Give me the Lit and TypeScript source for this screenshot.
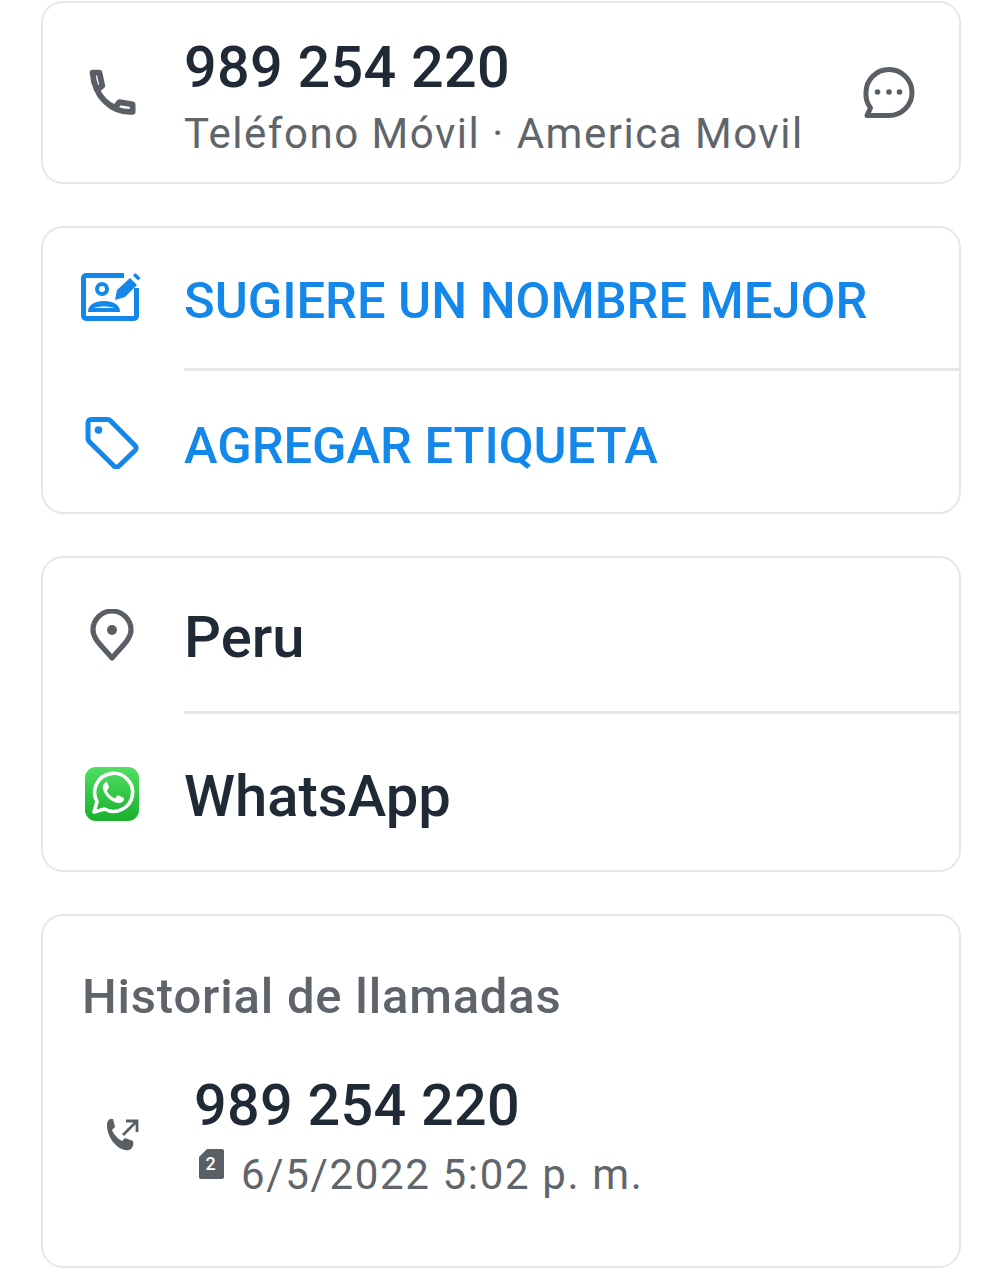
import { LitElement, html, css, svg } from "lit";
import { customElement } from "lit/decorators.js";

const phone = svg`<path d="M8 6.500h5.200l2.200 10-4 3.200c2.400 5.600 7 10.600 13.600 13.400l3.400-4.200 10 1.800v5.600c-15.500 1-29-11-30.400-29.800z" fill="none" stroke="currentColor" stroke-width="4.400" stroke-linejoin="round"/>`;

@customElement("app-root")
export class AppRoot extends LitElement {
  static styles = css`
    :host {
      display: block;
      width: 997px;
      height: 1280px;
      background: #fff;
      font-family: Roboto, "Noto Sans", sans-serif;
      color: #1f2a36;
      overflow: hidden;
    }
    .page {
      display: flex;
      flex-direction: column;
      gap: 42px;
      padding: 1px 36px 0 41px;
    }
    .card {
      border: 2px solid #e6e7e9;
      border-radius: 22px;
      background: #fff;
      box-sizing: border-box;
    }
    .contact {
      height: 183px;
      display: flex;
      align-items: center;
    }
    .slot {
      width: 141px;
      flex: none;
      display: flex;
      justify-content: center;
      box-sizing: border-box;
      color: #5a5f66;
    }
    .slot.nudge { padding-right: 4px; }
    .slot.edit { padding-right: 6px; }
    .slot svg { display: block; }
    .text { flex: 1; min-width: 0; margin-top: 10px; }
    .grow { flex: 1; min-width: 0; }
    .number {
      font-size: 57.5px;
      font-weight: 500;
      line-height: 66px;
      letter-spacing: 0.3px;
    }
    .sub {
      font-size: 42px;
      line-height: 52px;
      color: #60656c;
      letter-spacing: 1.52px;
      margin-top: 7px;
    }
    .bubble { width: 54px; margin-right: 43px; color: #5a5f66; }
    .row {
      display: flex;
      align-items: center;
      box-sizing: border-box;
    }
    .action { color: #1488ea; font-size: 50.6px; font-weight: 500; }
    .action .slot { color: #1488ea; }
    .suggest { height: 140px; padding-bottom: 3px; }
    .suggest span { margin-top: 7px; }
    .tag { height: 141px; padding-top: 3px; }
    .tag span { margin-top: 5px; }
    .info { font-size: 58px; font-weight: 500; }
    .info span { margin-top: 3px; }
    .place { height: 153px; padding-top: 1px; }
    .app { height: 156px; padding-top: 4px; }
    .divider {
      height: 3px;
      background: #e6e7e9;
      margin-left: 141px;
    }
    .history {
      height: 354px;
      padding: 53px 0 0 39px;
    }
    .heading {
      font-size: 49px;
      font-weight: 500;
      line-height: 56px;
      letter-spacing: 0.8px;
      color: #5f646b;
    }
    .call {
      display: flex;
      align-items: center;
      margin-top: 48px;
    }
    .call-icon {
      width: 112px;
      flex: none;
      padding-left: 24px;
      margin-top: -4px;
      box-sizing: border-box;
      color: #5a5f66;
    }
    .call-icon svg { display: block; }
    .meta {
      display: flex;
      align-items: center;
      gap: 17px;
      font-size: 42px;
      line-height: 52px;
      color: #60656c;
      letter-spacing: 1.65px;
      margin-top: 10px;
    }
    .sim { color: #5a5f66; margin-top: -22px; margin-left: 5px; }
    .sim svg { display: block; }
    .sim text { font-family: Roboto, sans-serif; font-size: 18px; font-weight: 500; fill: #fff; }
  `;

  render() {
    return html`<div class="page">
      <section class="card contact">
        <div class="slot edit">
          <svg width="58" height="58" viewBox="0 0 44 44">${phone}</svg>
        </div>
        <div class="text">
          <div class="number">989 254 220</div>
          <div class="sub">Teléfono Móvil · America Movil</div>
        </div>
        <svg class="bubble" height="55" viewBox="0 0 54 54">
          <path d="M4 27a23 23 0 1 1 23 23H5l3.500-7.500A23 23 0 0 1 4 27z" fill="none" stroke="currentColor" stroke-width="5" stroke-linejoin="round"/>
          <circle cx="15.500" cy="26.500" r="2.800" fill="currentColor"/>
          <circle cx="27" cy="26.500" r="2.800" fill="currentColor"/>
          <circle cx="37.500" cy="26.500" r="2.800" fill="currentColor"/>
        </svg>
      </section>

      <section class="card">
        <div class="row action suggest">
          <div class="slot edit">
            <svg width="60" height="48" viewBox="0 0 60 48">
              <path d="M43 2.500H5a2.500 2.500 0 0 0-2.500 2.500v38a2.500 2.500 0 0 0 2.500 2.500h48a2.500 2.500 0 0 0 2.500-2.500V15" fill="none" stroke="currentColor" stroke-width="5"/>
              <circle cx="21" cy="16" r="5" fill="none" stroke="currentColor" stroke-width="4"/>
              <path d="M7 39c0-7 6-11 16-11s16 4 16 11z" fill="currentColor"/>
              <path d="M13 35c4-2 16-2 20 0z" fill="#fff"/>
              <path d="M34 27l2-10L49 5l7 7-12 12z" fill="currentColor"/>
              <path d="M52 2.500l2.500-2.500 5 5-2.500 2.500z" fill="currentColor"/>
            </svg>
          </div>
          <span>SUGIERE UN NOMBRE MEJOR</span>
        </div>
        <div class="divider"></div>
        <div class="row action tag">
          <div class="slot nudge">
            <svg width="54" height="52" viewBox="0 0 54 52">
              <path d="M6 2.500h16.500c1.300 0 2.300.5 3.200 1.400L50 28.500c1.500 1.500 1.500 3.500 0 5L34 49c-1.500 1.500-3.500 1.500-5 0L4.300 24.700c-.9-.9-1.300-2-1.300-3.200V6c0-2 1.300-3.500 3-3.500z" fill="none" stroke="currentColor" stroke-width="5" stroke-linejoin="round"/>
              <circle cx="13.500" cy="13" r="3.800" fill="currentColor"/>
            </svg>
          </div>
          <span>AGREGAR ETIQUETA</span>
        </div>
      </section>

      <section class="card">
        <div class="row info place">
          <div class="slot nudge">
            <svg width="44" height="52" viewBox="0 0 44 52">
              <path d="M22 49C12 37 3 30 3 21a19 19 0 0 1 38 0c0 9-9 16-19 28z" fill="none" stroke="currentColor" stroke-width="5.200" stroke-linejoin="round"/>
              <circle cx="22" cy="21" r="5" fill="currentColor"/>
            </svg>
          </div>
          <span>Peru</span>
        </div>
        <div class="divider"></div>
        <div class="row info app">
          <div class="slot nudge">
            <svg width="54" height="54" viewBox="0 0 54 54">
              <defs>
                <linearGradient id="wa" x1="0" y1="0" x2="0" y2="1">
                  <stop offset="0" stop-color="#52de64"/>
                  <stop offset="1" stop-color="#18b02c"/>
                </linearGradient>
              </defs>
              <rect width="54" height="54" rx="11" fill="url(#wa)"/>
              <path d="M9 45l3-10.500A19 19 0 1 1 19.500 42z" fill="none" stroke="#fff" stroke-width="3.600" stroke-linejoin="round"/>
              <path d="M21 15.500c-2 .8-3.800 3-3 6.500 1.500 6 7.500 12.500 14.500 14 3.500.6 6-1.200 6.500-3.800.2-.8-.2-1.400-.9-1.700l-4.500-2c-.7-.3-1.200-.1-1.700.5l-1.500 1.900c-.4.4-.8.500-1.400.2-3-1.400-5.600-4-7-6.800-.3-.6-.2-1 .2-1.400l1.500-1.800c.4-.5.500-1 .2-1.600l-1.800-4.300c-.3-.7-.8-.9-1.300-.7z" fill="#fff"/>
            </svg>
          </div>
          <span>WhatsApp</span>
        </div>
      </section>

      <section class="card history">
        <div class="heading">Historial de llamadas</div>
        <div class="call">
          <div class="call-icon">
            <svg width="34" height="34" viewBox="0 0 34 34">
              <path d="M1 7c0-3 1-5 3-6l3 0 2 8-3 3c1.500 4 6 9 10 11l3-3 8 3c1 3 0 6-2 8-2 1.500-4 1.500-6 1C9 30 1 18 1 7z" fill="currentColor"/>
              <path d="M17 17L30 4M20 3h11v11" fill="none" stroke="currentColor" stroke-width="2.800"/>
            </svg>
          </div>
          <div class="grow">
            <div class="number">989 254 220</div>
            <div class="meta">
              <span class="sim">
                <svg width="25" height="30" viewBox="0 0 25 30">
                  <path d="M8 0h15a2 2 0 0 1 2 2v26a2 2 0 0 1-2 2H2a2 2 0 0 1-2-2V8z" fill="currentColor"/>
                  <text x="12.500" y="21" text-anchor="middle">2</text>
                </svg>
              </span>
              <span>6/5/2022 5:02 p. m.</span>
            </div>
          </div>
        </div>
      </section>
    </div>`;
  }
}
